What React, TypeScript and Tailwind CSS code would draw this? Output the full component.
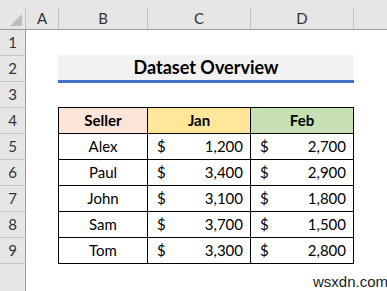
import React from "react";

const font = { fontFamily: "Lato, 'Open Sans', sans-serif" };

const rows = [
  { name: "Alex", jan: "1,200", feb: "2,700" },
  { name: "Paul", jan: "3,400", feb: "2,900" },
  { name: "John", jan: "3,100", feb: "1,800" },
  { name: "Sam", jan: "3,700", feb: "1,500" },
  { name: "Tom", jan: "3,300", feb: "2,800" },
];

const rowStarts = [
  "row-start-2",
  "row-start-3",
  "row-start-4",
  "row-start-5",
  "row-start-6",
  "row-start-7",
  "row-start-8",
  "row-start-9",
  "row-start-10",
  "row-start-11",
];

function ColHead({ label, col }: { label: string; col: string }) {
  return (
    <div className={`${col} row-start-1 flex bg-[#e6e6e6] border-b border-[#9b9b9b]`}>
      <span className="flex-1 flex items-center justify-center pt-[8px] text-[15px] text-[#333]">{label}</span>
      <div className="w-px h-[22px] self-end bg-[#c4c4c4]" />
    </div>
  );
}

export default function App() {
  return (
    <div className="relative w-[387px] h-[291px] overflow-hidden bg-white" style={font}>
      <div className="grid grid-cols-[26px_33px_89px_103px_103px_1fr] grid-rows-[30px_repeat(10,26px)]">
        {/* corner */}
        <div className="col-start-1 row-start-1 flex bg-[#e6e6e6] border-b border-[#9b9b9b]">
          <div className="flex-1 flex items-end justify-end pb-[3px] pr-[3px]">
            <svg width="12" height="12" viewBox="0 0 12 12">
              <polygon points="12,0 12,12 0,12" fill="#bdbdbd" />
            </svg>
          </div>
          <div className="w-px h-[22px] self-end bg-[#c4c4c4]" />
        </div>
        <ColHead label="A" col="col-start-2" />
        <ColHead label="B" col="col-start-3" />
        <ColHead label="C" col="col-start-4" />
        <ColHead label="D" col="col-start-5" />
        <div className="col-start-6 row-start-1 bg-[#e6e6e6] border-b border-[#9b9b9b]" />

        {rowStarts.map((r, i) => (
          <div
            key={r}
            className={`col-start-1 ${r} flex items-center justify-center bg-[#e6e6e6] border-r border-[#9b9b9b] ${
              i < 9 ? "border-b border-b-[#c8c8c8]" : ""
            } text-[15px] text-[#333] ${i === 9 ? "h-[28px]" : ""}`}
          >
            {i < 9 ? i + 1 : ""}
          </div>
        ))}

        {/* Title */}
        <div className="col-start-3 col-span-3 row-start-3 self-start -mt-px -ml-px w-[296px] h-[28px] bg-[#f2f2f2] border-b-[3px] border-[#4472c4] flex items-center justify-center">
          <span className="text-[18px] font-bold text-black">Dataset Overview</span>
        </div>

        {/* Table */}
        <div className="col-start-3 col-span-3 row-start-5 row-span-6 self-start -mt-px -ml-px w-[296px] border-l border-t border-black text-[15px] text-black">
          <div className="flex h-[26px]">
            <div className="w-[89px] flex items-center justify-center border-r border-b border-black bg-[#fce4d6] font-bold">Seller</div>
            <div className="w-[103px] flex items-center justify-center border-r border-b border-black bg-[#ffe699] font-bold">Jan</div>
            <div className="w-[103px] flex items-center justify-center border-r border-b border-black bg-[#c6e0b4] font-bold">Feb</div>
          </div>
          {rows.map((r) => (
            <div key={r.name} className="flex h-[26px]">
              <div className="w-[89px] flex items-center justify-center border-r border-b border-black">{r.name}</div>
              <div className="w-[103px] flex items-center justify-between pl-[9px] pr-[7px] border-r border-b border-black">
                <span>$</span>
                <span>{r.jan}</span>
              </div>
              <div className="w-[103px] flex items-center justify-between pl-[9px] pr-[7px] border-r border-b border-black">
                <span>$</span>
                <span>{r.feb}</span>
              </div>
            </div>
          ))}
        </div>
      </div>
      <div
        className="absolute left-[313px] top-[271px] text-[15px] text-[#222]"
        style={{ fontFamily: "'Liberation Sans', Arial, sans-serif" }}
      >
        wsxdn.com
      </div>
    </div>
  );
}
